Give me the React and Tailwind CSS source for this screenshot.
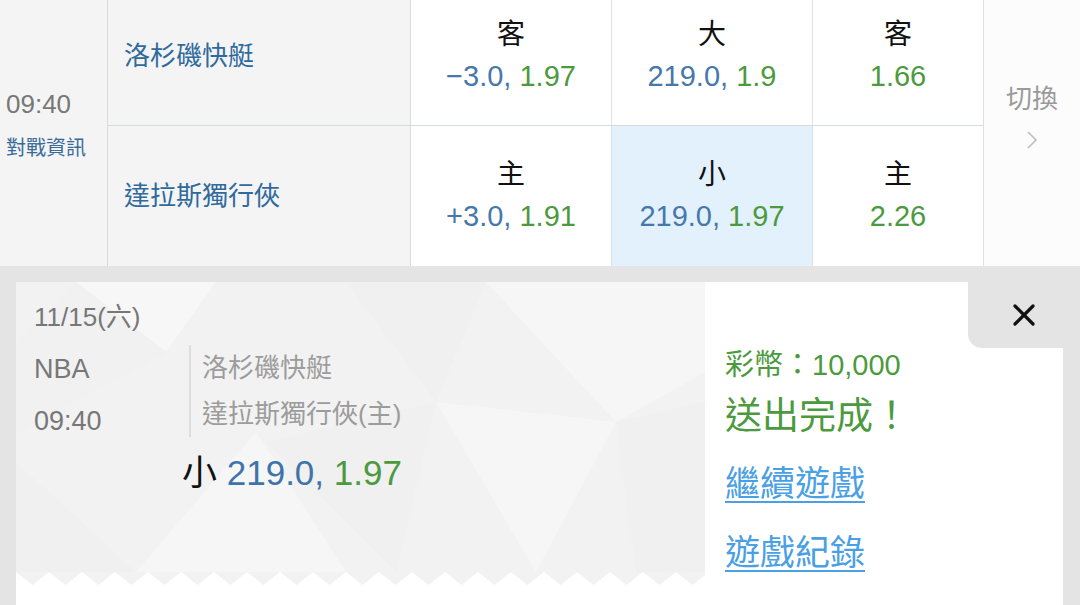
import React from 'react';

const FONT = "font-['Liberation_Sans','Noto_Sans_CJK_TC',sans-serif]";

const odds = [
    [
        { label: '客', a: '−3.0, ', b: '1.97' },
        { label: '大', a: '219.0, ', b: '1.9' },
        { label: '客', a: '', b: '1.66' },
    ],
    [
        { label: '主', a: '+3.0, ', b: '1.91' },
        { label: '小', a: '219.0, ', b: '1.97', active: true },
        { label: '主', a: '', b: '2.26' },
    ],
];
const teams = ['洛杉磯快艇', '達拉斯獨行俠'];
const widths = ['w-[201px]', 'w-[201px]', 'w-[170px]'];

const OddsCell = ({ cell, w }) => (
    <div className={`${w} border-r border-[#dcdfe3] last:border-r-0 flex flex-col items-center justify-center ${cell.active ? 'bg-[#e2f1fb]' : 'bg-white'}`}>
        <div className="text-[28px] leading-[40px] text-[#111]">{cell.label}</div>
        <div className="text-[29px] leading-[42px] whitespace-pre">
            <span className="text-[#4678ab]">{cell.a}</span>
            <span className="text-[#4c9a3e]">{cell.b}</span>
        </div>
    </div>
);

const Pattern = () => (
    <svg className="absolute inset-0" width="689" height="290" viewBox="0 0 689 290">
        <polygon points="60,0 200,0 150,70" fill="#f7f7f7" />
        <polygon points="330,0 470,0 420,120" fill="#f0f0f0" />
        <polygon points="470,0 689,0 689,90 600,140" fill="#f6f6f6" />
        <polygon points="0,180 120,290 0,290" fill="#f0f0f0" />
        <polygon points="120,290 240,150 330,290" fill="#f6f6f6" />
        <polygon points="250,160 420,120 380,290" fill="#efefef" opacity="0.6" />
        <polygon points="420,120 600,140 520,290" fill="#f6f6f6" />
        <polygon points="600,140 689,120 689,290 620,290" fill="#eeeeee" opacity="0.6" />
        <polygon points="0,60 60,0 150,70 0,150" fill="#f0f0f0" opacity="0.5" />
    </svg>
);

const Zigzag = () => {
    const w = 689, step = 33;
    let d = 'M0 0';
    for (let x = 0; x < w; x += step) d += ` L${x + step / 2} 13 L${x + step} 0`;
    d += ` L${w} 0 Z`;
    return (
        <svg width={w} height="13" viewBox={`0 0 ${w} 13`} className="block">
            <path d={d} fill="#f2f2f2" />
        </svg>
    );
};

export default function App() {
    return (
        <div className={`w-[1080px] h-[605px] overflow-hidden bg-white ${FONT}`}>
            {/* odds table */}
            <div className="flex h-[266px]">
                <div className="w-[108px] bg-[#f4f4f4] border-r border-[#d6dbe1] pl-[6px] pt-[89px]">
                    <div className="text-[26px] leading-[30px] text-[#777]">09:40</div>
                    <div className="mt-[16px] text-[20px] leading-[26px] text-[#3a6b99]">對戰資訊</div>
                </div>
                <div className="w-[875px] flex flex-col">
                    {odds.map((row, r) => (
                        <div key={r} className={`flex ${r === 0 ? 'h-[126px] border-b border-[#d6dbe1] [&>div]:pb-[13px]' : 'flex-1'}`}>
                            <div className="w-[303px] bg-[#f4f4f4] border-r border-[#d6dbe1] pl-[16px] flex items-center">
                                <span className="text-[26px] text-[#2f6a9c]">{teams[r]}</span>
                            </div>
                            {row.map((cell, i) => (
                                <OddsCell key={i} cell={cell} w={widths[i]} />
                            ))}
                        </div>
                    ))}
                </div>
                <div className="flex-1 border-l border-[#dcdfe3] bg-[#fcfcfc] flex flex-col items-center pt-[82px]">
                    <div className="text-[26px] leading-[34px] text-[#9a9a9a]">切換</div>
                    <svg className="mt-[14px]" width="12" height="20" viewBox="0 0 12 20">
                        <path d="M2 2 L10 10 L2 18" fill="none" stroke="#bdbdbd" strokeWidth="1.6" />
                    </svg>
                </div>
            </div>

            {/* bet result */}
            <div className="bg-[#e4e4e4] pt-[16px] pl-[16px] pr-[17px] h-[339px]">
                <div className="bg-white h-[323px] flex">
                    <div className="w-[689px] flex flex-col">
                        <div className="relative h-[290px] bg-[#f2f2f2] pl-[18px] pt-[20px]">
                            <Pattern />
                            <div className="relative">
                                <div className="text-[26px] leading-[30px] text-[#777]">11/15(六)</div>
                                <div className="mt-[11px] flex items-start">
                                    <div className="w-[155px] text-[27px] leading-[52px] text-[#777]">
                                        <div>NBA</div>
                                        <div>09:40</div>
                                    </div>
                                    <div className="mt-[2px] border-l-2 border-[#dedede] pl-[11px] text-[26px] leading-[46px] text-[#9c9c9c]">
                                        <div>洛杉磯快艇</div>
                                        <div>達拉斯獨行俠(主)</div>
                                    </div>
                                </div>
                                <div className="mt-[6px] ml-[148px] text-[35px] leading-[40px] whitespace-pre">
                                    <span className="text-[#111]">小 </span>
                                    <span className="text-[#3f74aa]">219.0, </span>
                                    <span className="text-[#4c9a3e]">1.97</span>
                                </div>
                            </div>
                        </div>
                        <Zigzag />
                    </div>
                    <div className="flex-1 flex flex-col">
                        <div className="flex justify-end -mr-[17px]">
                            <div className="w-[112px] h-[66px] bg-[#e4e4e4] rounded-bl-[14px] flex items-center justify-center">
                                <svg width="24" height="24" viewBox="0 0 24 24">
                                    <path d="M3 3 L21 21 M21 3 L3 21" stroke="#111" strokeWidth="3.2" strokeLinecap="round" />
                                </svg>
                            </div>
                        </div>
                        <div className="pl-[20px] text-[#4c9a3e]">
                            <div className="text-[29px] leading-[34px]">彩幣：10,000</div>
                            <div className="mt-[12px] text-[37px] leading-[46px]">送出完成！</div>
                            <div className="mt-[22px] text-[35px] leading-[44px] text-[#4aa0e4] underline decoration-2 underline-offset-[5px]">繼續遊戲</div>
                            <div className="mt-[25px] text-[35px] leading-[44px] text-[#4aa0e4] underline decoration-2 underline-offset-[5px]">遊戲紀錄</div>
                        </div>
                    </div>
                </div>
            </div>
        </div>
    );
}
